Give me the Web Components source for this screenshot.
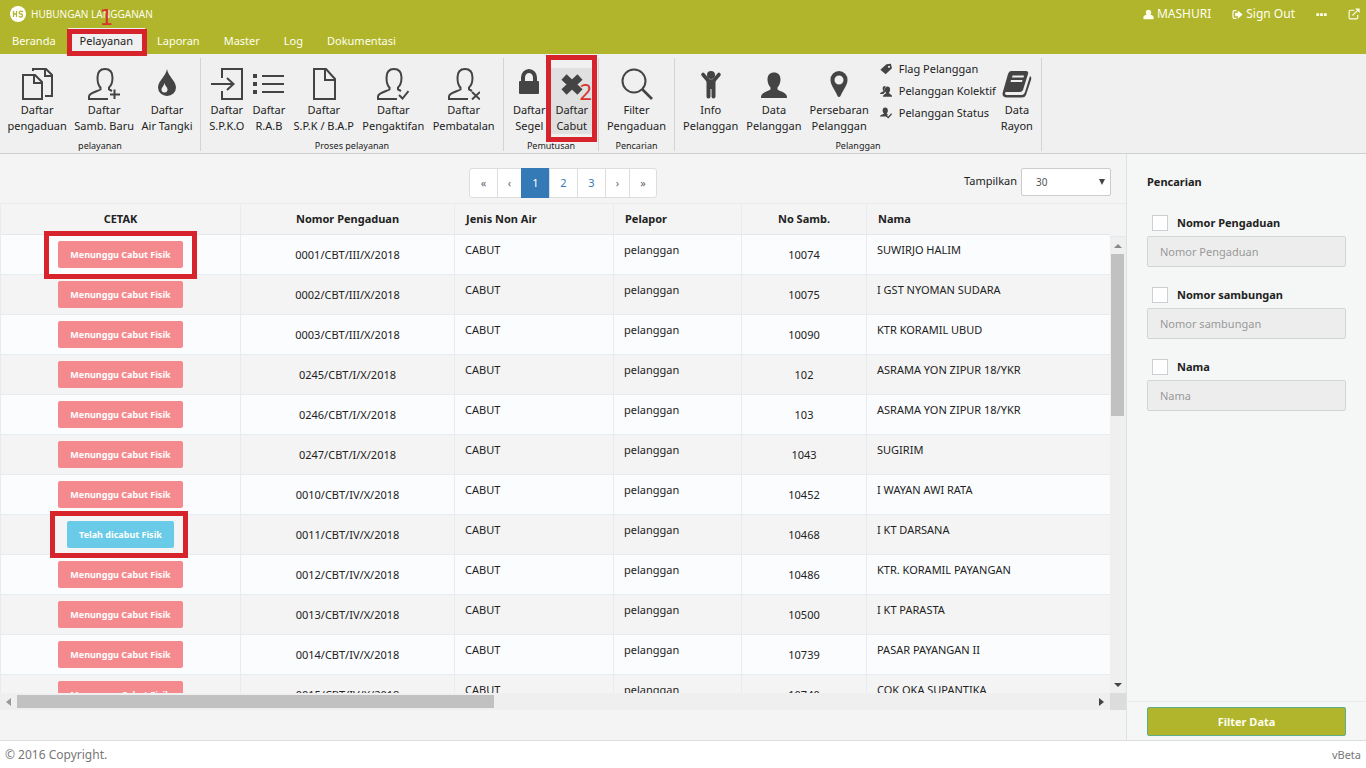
<!DOCTYPE html>
<html lang="id">
<head>
<meta charset="utf-8">
<title>Hubungan Langganan</title>
<style>
  html, body { margin: 0; height: 100%; }
  body { font: 11px/16px "Noto Sans", "Open Sans", sans-serif; color: #222; background: #f4f4f4; overflow: hidden; }
</style>
</head>
<body>
<app-shell>
  <app-header slot="header"></app-header>
  <ribbon-bar slot="ribbon">
    <ribbon-group label="pelayanan" style="--group-width:201px">
      <ribbon-button icon="docs" top="Daftar" bottom="pengaduan"></ribbon-button>
      <ribbon-button icon="userPlus" top="Daftar" bottom="Samb. Baru"></ribbon-button>
      <ribbon-button icon="drop" top="Daftar" bottom="Air Tangki"></ribbon-button>
    </ribbon-group>
    <ribbon-group label="Proses pelayanan" style="--group-width:303px">
      <ribbon-button icon="enter" top="Daftar" bottom="S.P.K.O"></ribbon-button>
      <ribbon-button icon="list" top="Daftar" bottom="R.A.B"></ribbon-button>
      <ribbon-button icon="doc" top="Daftar" bottom="S.P.K / B.A.P"></ribbon-button>
      <ribbon-button icon="userCheck" top="Daftar" bottom="Pengaktifan"></ribbon-button>
      <ribbon-button icon="userX" top="Daftar" bottom="Pembatalan"></ribbon-button>
    </ribbon-group>
    <ribbon-group label="Pemutusan" style="--group-width:95px">
      <ribbon-button icon="lock" top="Daftar" bottom="Segel"></ribbon-button>
      <ribbon-button icon="cross" top="Daftar" bottom="Cabut" active><mark-box style="--inset:-13px -5px -8px -5px"></mark-box><mark-number style="--at-x:28px;--at-y:11px">2</mark-number></ribbon-button>
    </ribbon-group>
    <ribbon-group label="Pencarian" style="--group-width:76px">
      <ribbon-button icon="search" top="Filter" bottom="Pengaduan"></ribbon-button>
    </ribbon-group>
    <ribbon-group label="Pelanggan" style="--group-width:367px">
      <ribbon-button icon="child" top="Info" bottom="Pelanggan"></ribbon-button>
      <ribbon-button icon="user" top="Data" bottom="Pelanggan"></ribbon-button>
      <ribbon-button icon="pin" top="Persebaran" bottom="Pelanggan"></ribbon-button>
      <ribbon-list></ribbon-list>
      <ribbon-button icon="book" top="Data" bottom="Rayon"></ribbon-button>
    </ribbon-group>
  </ribbon-bar>
  <list-toolbar></list-toolbar>
  <data-grid></data-grid>
  <search-panel slot="aside">
    <filter-field label="Nomor Pengaduan"></filter-field>
    <filter-field label="Nomor sambungan"></filter-field>
    <filter-field label="Nama"></filter-field>
  </search-panel>
  <app-footer slot="footer"></app-footer>
</app-shell>

<script>
const BASE = '*{box-sizing:border-box}button,input,select{font:inherit;color:inherit;margin:0}a{color:inherit;text-decoration:none}';
const define = (name, css, html) => customElements.define(name, class extends HTMLElement {
  connectedCallback() {
    if (this.shadowRoot) return;
    const body = typeof html === 'function' ? html(this) : html;
    this.attachShadow({ mode: 'open' }).innerHTML = `<style>:host{box-sizing:border-box}${BASE}${css}</style>${body}`;
  }
});

const outline = extra => `<g fill="none" stroke="currentColor" stroke-width="2"><path d="M20 31H1V28.500C1 25 9 23.500 12.500 21.500V19.500C10 17.500 9.500 14 9.500 9.500C9.500 4.500 12 1 17 1S24.500 4.500 24.500 9.500C24.500 14 23.500 17.500 21 19.500V21.500L24 23"/>${extra}</g>`;
const USER = 'M16 4.500C20 4.500 22.500 7 22.500 11.500C22.500 15 21 18 19.500 19.500V21.500C22 23.500 29 24.500 29 29V30H3V29C3 24.500 10 23.500 12.500 21.500V19.500C11 18 9.500 15 9.500 11.500C9.500 7 12 4.500 16 4.500Z';
const ICONS = {
  docs: '<g fill="none" stroke="currentColor" stroke-width="2"><path d="M21 14L14 7H2V31H21Z"/><path d="M13 7V15H21"/><path d="M12 3V1H25L31 7V28H24"/><path d="M24 1V8H31"/></g>',
  userPlus: outline('<path d="M26.500 21.500V31M22 26.500H32"/>'),
  userCheck: outline('<path d="M22 27L25.500 30.500L31.500 23"/>'),
  userX: outline('<path d="M24 24L32 31.500M32 24L24 31.500"/>'),
  drop: '<path fill="currentColor" d="M16 1C17 8 25 13 25 19.500A9 8.500 0 0 1 7 19.500C7 13 15 8 16 1Z"/><path fill="#f0f0f0" d="M13.500 15C14 18 16.500 19 16.500 21.500A3 3 0 0 1 10.500 21.500C10.500 19.500 13 18 13.500 15Z"/>',
  enter: '<g fill="none" stroke="currentColor" stroke-width="2"><path d="M11 10V1H31V31H11V23M0 16H22M16 10L22.500 16L16 22"/></g>',
  list: '<path fill="currentColor" d="M0 6H4V10H0ZM0 14H4V18H0ZM0 22H4V26H0ZM9 7H31V9H9ZM9 15H31V17H9ZM9 23H31V25H9Z"/>',
  doc: '<g fill="none" stroke="currentColor" stroke-width="2"><path d="M6 1H18L27 11V31H6Z"/><path d="M17 1V12H27"/></g>',
  lock: '<path fill="currentColor" d="M7 14H25V25H7Z" stroke="currentColor" stroke-width="2" stroke-linejoin="round"/><path fill="none" stroke="currentColor" stroke-width="4" d="M10 14V9.500A6 6.500 0 0 1 22 9.500V14"/>',
  cross: '<path stroke="currentColor" stroke-width="7.500" d="M8 9L24 24M24 9L8 24"/>',
  search: '<g fill="none" stroke="currentColor" stroke-width="2"><circle cx="13" cy="13" r="11.500"/><path d="M21 21L31 31" stroke-width="2.600"/></g>',
  child: '<circle cx="16" cy="7" r="4" fill="currentColor"/><path fill="none" stroke="currentColor" stroke-width="3.600" stroke-linecap="round" stroke-linejoin="round" d="M8 6.500L13.500 13H18.500L24 6.500"/><path fill="currentColor" d="M11.500 12H20.500V28.500A2 2 0 0 1 16.500 28.500V21H15.500V28.500A2 2 0 0 1 11.500 28.500Z"/>',
  user: `<path fill="currentColor" d="${USER}"/>`,
  pin: '<path fill="currentColor" fill-rule="evenodd" d="M16 3A8.500 8.500 0 0 1 24.500 12C24.500 17 19.500 23 17.500 28A1.600 1.600 0 0 1 14.500 28C12.500 23 7.500 17 7.500 12A8.500 8.500 0 0 1 16 3ZM16 7.500A4.500 4.500 0 1 0 16 16.500A4.500 4.500 0 0 0 16 7.500Z"/>',
  book: '<path fill="currentColor" fill-rule="evenodd" d="M10 3H25Q28 3 27 6L22 22Q21 24 19 24H5Q3 25 5 27H20.500Q23 27 24 24L29 8Q31 9 30 12L25 27Q24 29.500 21 29.500H6Q0 29 2 23.500L7 6Q8 3 10 3ZM11.500 7.500L11 9.500H22.500L23 7.500ZM10 12L9.500 14H21L21.500 12Z"/>',
  tag: '<path fill="currentColor" fill-rule="evenodd" d="M17 3L29 2L32 14L15 30L1 18ZM24 7A3 3 0 1 0 24.100 7Z"/>',
  users: '<path fill="currentColor" d="M15 3C11 2 7 4 7 9C7 12 8 14 9.500 16C9 18 1 19 0 24H9C11 20 15 19 15 18C12 14 11 8 15 3Z"/><path fill="currentColor" transform="translate(4 1)" d="M16 3C20.500 3 23 6.500 23 11C23 15 21.500 18 19.500 20C22 23 28 24 28 29V30H4V29C4 24 10 23 12.500 20C10.500 18 9 15 9 11C9 6.500 11.500 3 16 3Z"/>',
  userStatus: '<path fill="currentColor" d="M14 1C18.500 1 21 4.500 21 9C21 13 19.500 15 17.500 17L21 20L18 25H0C0 20 8 20 10.500 17C8.500 15 7 13 7 9C7 4.500 9.500 1 14 1Z"/><path fill="none" stroke="currentColor" stroke-width="3.500" d="M17 24L22 28L31 18"/>',
  userSolid: '<path fill="currentColor" d="M16 2C21 2 24 5 24 10C24 13 23 15 21.500 17C27 18 31 20 31 26C31 29 30 30 27 30H5C2 30 1 29 1 26C1 20 5 18 10.500 17C9 15 8 13 8 10C8 5 11 2 16 2Z"/>',
  signOut: '<path fill="none" stroke="currentColor" stroke-width="3.500" d="M13 5H6Q3 5 3 8V24Q3 27 6 27H13"/><path fill="currentColor" d="M9 11H17V4L31 16L17 28V21H9Z"/>',
  dots: '<path fill="currentColor" d="M1 12H9V20H1ZM12 12H20V20H12ZM23 12H31V20H23Z"/>',
  external: '<path fill="none" stroke="currentColor" stroke-width="3" d="M17 6H6Q3 6 3 9V26Q3 29 6 29H23Q26 29 26 26V18M12 20L27 5"/><path fill="currentColor" d="M19 1H31V13Z"/>',
  logo: '<circle cx="16" cy="16" r="16" fill="#fff"/><path fill="none" stroke="#b0b52c" stroke-width="2.600" d="M7 10V22M13 10V22M7 16H13M26 12Q20 8 18.500 13Q18 16 22 16Q26 17 24.500 20.500Q22 24 18 20"/>'
};
define('ui-icon', ':host{display:block;width:var(--size,32px);height:var(--size,32px);flex:none}svg{display:block;width:100%;height:100%}',
  el => `<svg viewBox="0 0 32 32" aria-hidden="true">${ICONS[el.getAttribute('name')]}</svg>`);

/* Tutorial marks that float above the control they belong to */
define('mark-box', ':host{display:block;position:absolute;inset:var(--inset);border:5px solid #d7242c;pointer-events:none;z-index:2}', '');
define('mark-number', ':host{display:block;position:absolute;left:var(--at-x);top:var(--at-y);font-size:22px;line-height:24px;color:#d7352c;z-index:3}', '<slot></slot>');

define('app-shell', `
  :host{display:grid;grid-template-rows:auto auto 1fr auto;height:100vh}
  .body{display:grid;grid-template-columns:1fr 240px;min-height:0}
  main{display:flex;flex-direction:column;min-width:0;min-height:0;padding-bottom:30px;background:#f4f4f4}
  `, '<slot name="header"></slot><slot name="ribbon"></slot><div class="body"><main><slot></slot></main><slot name="aside"></slot></div><slot name="footer"></slot>');

define('app-header', `
  :host{display:block;background:#b0b52c;color:#fffff0}
  .top{display:flex;align-items:center;height:28px;padding:0 6px 0 10px;font-size:12px}
  .brand{display:flex;align-items:center;gap:5px;font-size:10px;line-height:14px;margin-right:auto}
  .user{display:flex;align-items:center;--size:11px}
  .user a{display:flex;align-items:center;gap:3px;margin-left:21px}
  nav{display:flex;height:26px}
  nav a{position:relative;padding:0 12px;line-height:26px}
  nav a.on{background:#f0f0f0}
  nav a.on{color:#222}
  `, `<div class="top"><a class="brand" href="#"><ui-icon name="logo" style="--size:16px"></ui-icon>HUBUNGAN LANGGANAN</a>
  <div class="user"><a href="#"><ui-icon name="userSolid"></ui-icon>MASHURI</a><a href="#"><ui-icon name="signOut"></ui-icon>Sign Out</a><a href="#" aria-label="Lainnya"><ui-icon name="dots"></ui-icon></a><a href="#" aria-label="Buka"><ui-icon name="external" style="--size:12px"></ui-icon></a></div></div>
  <nav><a href="#">Beranda</a><a href="#" class="on">Pelayanan<mark-box style="--inset:1px -2px -2px -1px"></mark-box><mark-number style="--at-x:32px;--at-y:-22px;font-family:'DejaVu Sans'">1</mark-number></a><a href="#">Laporan</a><a href="#">Master</a><a href="#">Log</a><a href="#">Dokumentasi</a></nav>`);

define('ribbon-bar', ':host{display:flex;background:#f0f0f0;border-bottom:1px solid #d0d0d0;padding:4px 0 2px}', '<slot></slot>');
define('ribbon-group', `
  :host{display:flex;flex-direction:column;width:var(--group-width);border-right:1px solid #d4d4d4;flex:none}
  .row{display:flex;justify-content:space-evenly;padding:0 3px;height:81px}
  .name{font-size:9px;line-height:12px;padding-top:1px;height:12px;text-align:center;color:#222}
  `, el => `<div class="row"><slot></slot></div><div class="name">${el.getAttribute('label')}</div>`);
define('ribbon-button', `
  :host{display:block;position:relative;margin-top:10px;height:66px}
  button{display:flex;flex-direction:column;align-items:center;gap:2px;border:0;padding:0 3px;background:none;white-space:nowrap;color:#444;line-height:16px;height:100%}
  span{color:#222}
  :host([active]) button{padding:0 4px;background:#e0e0e0}
  `, el => `<button type="button"><ui-icon name="${el.getAttribute('icon')}"></ui-icon><span>${el.getAttribute('top')}<br>${el.getAttribute('bottom')}</span></button><slot></slot>`);
define('ribbon-list', `
  :host{display:block;margin-left:6px}
  button{display:flex;align-items:center;gap:7px;border:0;background:none;padding:0;height:22px;white-space:nowrap;--size:12px}
  ui-icon{color:#444}
  `, '<button type="button"><ui-icon name="tag"></ui-icon>Flag Pelanggan</button><button type="button"><ui-icon name="users"></ui-icon>Pelanggan Kolektif</button><button type="button"><ui-icon name="userStatus"></ui-icon>Pelanggan Status</button>');

define('list-toolbar', `
  :host{display:grid;grid-template-columns:1fr auto 1fr;padding:14px 15px 5px;align-items:start}
  nav{grid-column:2;display:flex;border:1px solid #ddd;border-radius:3px;background:#fff;height:30px;color:#337ab7}
  nav a{width:28px;line-height:28px;text-align:center;border-left:1px solid #ddd}
  nav a:first-child{border:0;width:27px}nav a:last-child{width:27px}
  nav .step{width:24px}
  nav .gray{color:#667}
  nav .on{background:#337ab7;color:#fff;margin:-1px 0;line-height:30px;border-color:#337ab7}
  label{display:flex;gap:4px;justify-self:end;line-height:26px}
  .pick{position:relative;display:block}
  select{appearance:none;display:block;width:90px;height:28px;border:1px solid #ccc;border-radius:2px;background:#fff;padding:0 14px;font-size:10px;color:#555}
  .pick::after{content:"";position:absolute;right:6px;top:11px;border:3px solid transparent;border-top:6px solid #444;border-bottom:0}
  `, `<nav aria-label="Halaman"><a class="gray" href="#">«</a><a class="gray step" href="#">‹</a><a class="on" href="#">1</a><a href="#">2</a><a href="#">3</a><a class="gray step" href="#">›</a><a class="gray" href="#">»</a></nav>
  <label>Tampilkan <span class="pick"><select><option>30</option></select></span></label>`);

define('status-chip', `
  :host{display:inline-block;position:relative;vertical-align:top}
  button{display:block;height:27px;border:0;border-radius:2px;padding:0 12px;background:#f48a8e;color:#fff;font-size:9px;font-weight:700;white-space:nowrap}
  :host([done]) button{background:#69cbe7}
  `, '<button type="button"><slot></slot></button><slot name="mark"></slot>');

define('scroll-bar', `
  :host{display:flex;align-items:center;background:#efefef}
  :host([vertical]){flex-direction:column}
  i{flex:none;width:17px;height:17px;display:grid;place-items:center}
  i::before{content:"";border:4px solid transparent}
  .a::before{border-right:5px solid #999;border-left:0}.b::before{border-left:5px solid #444;border-right:0}
  :host([vertical]) .a::before{border:4px solid transparent;border-bottom:4px solid #888;border-top:0}
  :host([vertical]) .b::before{border:4px solid transparent;border-top:4px solid #444;border-bottom:0}
  .track{flex:1;align-self:stretch;display:flex}
  :host([vertical]) .track{flex-direction:column}
  .thumb{flex:0 0 var(--thumb);background:#c1c1c1;margin:2px 0}
  :host([vertical]) .thumb{margin:0 2px 0 1px}
  `, '<i class="a"></i><div class="track"><div class="thumb"></div></div><i class="b"></i>');

const ROWS = [
  ['0001/CBT/III/X/2018', '10074', 'SUWIRJO HALIM', 0, '--inset:-10px -14px -11px -14px'],
  ['0002/CBT/III/X/2018', '10075', 'I GST NYOMAN SUDARA'],
  ['0003/CBT/III/X/2018', '10090', 'KTR KORAMIL UBUD'],
  ['0245/CBT/I/X/2018', '102', 'ASRAMA YON ZIPUR 18/YKR'],
  ['0246/CBT/I/X/2018', '103', 'ASRAMA YON ZIPUR 18/YKR'],
  ['0247/CBT/I/X/2018', '1043', 'SUGIRIM'],
  ['0010/CBT/IV/X/2018', '10452', 'I WAYAN AWI RATA'],
  ['0011/CBT/IV/X/2018', '10468', 'I KT DARSANA', 1, '--inset:-10px -14px -10px -17px'],
  ['0012/CBT/IV/X/2018', '10486', 'KTR. KORAMIL PAYANGAN'],
  ['0013/CBT/IV/X/2018', '10500', 'I KT PARASTA'],
  ['0014/CBT/IV/X/2018', '10739', 'PASAR PAYANGAN II'],
  ['0015/CBT/IV/X/2018', '10740', 'COK OKA SUPANTIKA']
];
define('data-grid', `
  :host{display:grid;grid-template-columns:1fr 16px;grid-template-rows:minmax(0,1fr) 17px;flex:1;min-height:0}
  .view{overflow:hidden;min-height:0}
  .side{display:flex;flex-direction:column}
  .side::before{content:"";height:32px;border-top:1px solid #e8ebec;border-bottom:1px solid #e4e8ea}
  .side scroll-bar{flex:1}
  .corner{background:#dcdcdc}
  table{width:100%;table-layout:fixed;border-collapse:separate;border-spacing:0;border-left:1px solid #e9ecee}
  th,td{padding:0 10px;text-align:left;vertical-align:top;white-space:nowrap;border-right:1px solid #e9ecee;border-bottom:1px solid #e9ecee}
  th:last-child,td:last-child{border-right:0}
  th{height:32px;padding:0 11px;vertical-align:middle;line-height:14px;border-top:1px solid #e9ecee;border-bottom-color:#e4e8ea}
  td{height:40px;padding-top:7px}
  .c{text-align:center}
  td.c{vertical-align:middle;padding-top:0}
  tr:nth-child(odd) td{background:#fafcfe}
  `, () => `<div class="view"><table>
  <colgroup><col style="width:240px"><col style="width:214px"><col style="width:159px"><col style="width:128px"><col style="width:125px"><col></colgroup>
  <thead><tr><th class="c">CETAK</th><th class="c">Nomor Pengaduan</th><th>Jenis Non Air</th><th>Pelapor</th><th class="c">No Samb.</th><th>Nama</th></tr></thead>
  <tbody>${ROWS.map(([no, samb, nama, done, mark]) => `<tr><td class="c"><status-chip${done ? ' done' : ''}>${done ? 'Telah dicabut Fisik' : 'Menunggu Cabut Fisik'}${mark ? `<mark-box slot="mark" style="${mark}"></mark-box>` : ''}</status-chip></td><td class="c">${no}</td><td>CABUT</td><td>pelanggan</td><td class="c">${samb}</td><td>${nama}</td></tr>`).join('')}</tbody></table></div>
  <div class="side"><scroll-bar vertical style="--thumb:162px"></scroll-bar></div>
  <scroll-bar style="--thumb:477px"></scroll-bar><div class="corner"></div>`);

define('filter-field', `
  :host{display:block;margin-bottom:20px}
  label{display:flex;align-items:center;gap:9px;height:16px;margin:0 5px 5px;font-weight:700}
  input[type=checkbox]{appearance:none;width:16px;height:16px;border:1px solid #ccd0d2;background:#fff}
  input[type=text]{display:block;width:100%;height:31px;border:1px solid #d2d5d6;border-radius:2px;background:#ededed;padding:0 12px}
  ::placeholder{color:#999;opacity:1}
  `, el => { const l = el.getAttribute('label'); return `<label><input type="checkbox">${l}</label><input type="text" disabled placeholder="${l}" aria-label="${l}">`; });
define('search-panel', `
  :host{display:flex;flex-direction:column;background:#f5f7f6;border-left:1px solid #dde1e2}
  .fields{flex:1;padding:20px 20px 0}
  h2{font:inherit;font-weight:700;margin:0 0 25px}
  .go{border-top:1px solid #e8ecec;padding:5px 20px 4px}
  button{display:block;width:100%;height:29px;border:1px solid #5cae8a;border-radius:2px;background:#b0b52c;color:#fffff0;font-weight:700}
  `, '<div class="fields"><h2>Pencarian</h2><slot></slot></div><div class="go"><button type="button">Filter Data</button></div>');
define('app-footer', ':host{display:flex;justify-content:space-between;height:28px;line-height:28px;border-top:1px solid #ddd;padding:0 5px;background:#fff;color:#777;font-size:12px}span+span{font-size:11px}',
  '<span>© 2016 Copyright.</span><span>vBeta</span>');
</script>
</body>
</html>
